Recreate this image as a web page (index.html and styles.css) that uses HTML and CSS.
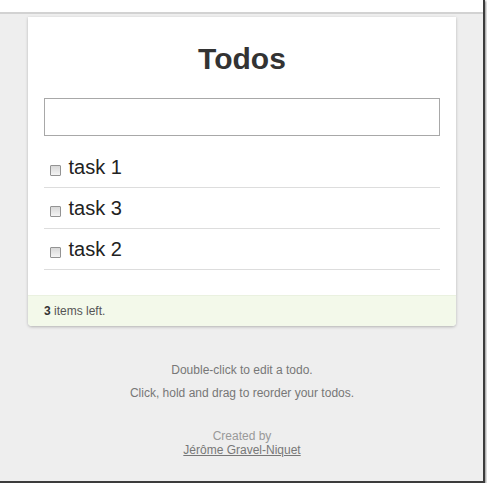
FILE: index.html
```html
<!DOCTYPE html>
<html lang="en">
<head>
    <meta charset="UTF-8">
    <title>Todos</title>
    <link rel="stylesheet" href="styles.css">
</head>
<body>
    <div class="window">
        <div class="chrome"></div>
        <div class="page">
            <div id="todoapp">
                <div class="content">
                    <h1>Todos</h1>
                    <input type="text" class="new-todo">
                    <ul class="todo-list">
                        <li><input type="checkbox" class="check"> task 1</li>
                        <li><input type="checkbox" class="check"> task 3</li>
                        <li><input type="checkbox" class="check"> task 2</li>
                    </ul>
                </div>
                <div class="todo-stats"><b>3</b> items left.</div>
            </div>

            <div class="instructions">
                <p>Double-click to edit a todo.</p>
                <p>Click, hold and drag to reorder your todos.</p>
            </div>

            <div class="credits">
                Created by<br>
                <a href="#">Jérôme Gravel-Niquet</a>
            </div>
        </div>
    </div>
</body>
</html>
```

FILE: styles.css
```css
body {
    margin: 0;
    background: white;
    font-family: "Liberation Sans", Arial, sans-serif;
    font-size: 12px;
    color: #333;
}

.window {
    width: 485px;
    height: 483px;
    box-sizing: border-box;
    display: flex;
    flex-direction: column;
    border-right: 2px solid #3c3c3c;
    border-bottom: 2px solid #3c3c3c;
    box-shadow: 1px 1px 2px rgba(0,0,0,0.45);
    overflow: hidden;
}

.chrome {
    height: 12px;
    background: white;
    border-bottom: 2px solid #d2d2d2;
    box-shadow: 0 1px 0 #e2e2e2;
}

.page {
    flex: 1;
    background: #eeeeee;
    padding-top: 3px;
}

#todoapp {
    width: 428px;
    margin-left: 28px;
    background: white;
    border-radius: 0 0 4px 4px;
    box-shadow: 0 1px 3px rgba(0,0,0,0.25);
}

.content {
    padding: 24px 16px 26px;
}

h1 {
    margin: 0 0 21px;
    font-size: 30px;
    line-height: 36px;
    font-weight: bold;
    text-align: center;
    color: #333;
}

.new-todo {
    display: block;
    width: 100%;
    height: 38px;
    margin: 0 0 11px;
    box-sizing: border-box;
    border: 1px solid #a8a8a8;
    padding: 4px 6px;
    font-family: inherit;
    font-size: 20px;
}

.todo-list {
    list-style: none;
    margin: 0;
    padding: 0;
}

.todo-list li {
    padding: 6px 0;
    font-size: 20px;
    line-height: 28px;
    color: #222;
    border-bottom: 1px solid #dddddd;
}

.check {
    appearance: none;
    -webkit-appearance: none;
    width: 11px;
    height: 11px;
    margin: 0 2px 0 6px;
    box-sizing: border-box;
    border: 1px solid #939393;
    border-radius: 1px;
    background: linear-gradient(#d8d8d8, #f4f4f4);
    vertical-align: -2px;
}

.todo-stats {
    padding: 8px 16px;
    line-height: 14px;
    background: #f3f9ea;
    border-top: 1px solid #eaf1e0;
    margin-top: -1px;
    border-radius: 0 0 4px 4px;
    color: #555;
}

.todo-stats b {
    color: #333;
}

.instructions {
    width: 428px;
    margin: 37px 0 0 28px;
    text-align: center;
    color: #777;
    line-height: 14px;
}

.instructions p {
    margin: 0 0 9px;
}

.credits {
    width: 428px;
    margin: 29px 0 0 28px;
    text-align: center;
    color: #999;
    line-height: 14px;
}

.credits a {
    color: #777;
}
```
